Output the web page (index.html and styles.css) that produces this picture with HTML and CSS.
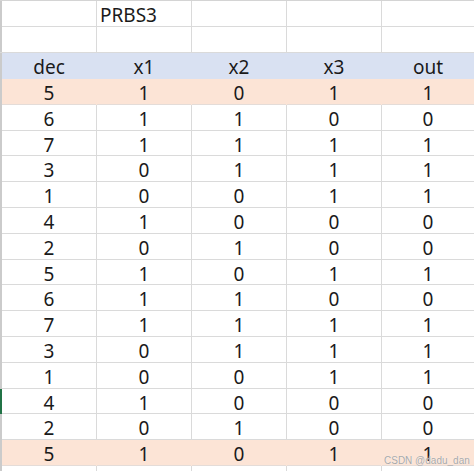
FILE: index.html
```html
<!DOCTYPE html>
<html>
<head>
<meta charset="utf-8">
<link rel="stylesheet" href="styles.css">
</head>
<body>
<div class="sheet">
  <div class="row r-top">
    <div class="c"></div><div class="c left">PRBS3</div><div class="c"></div><div class="c"></div><div class="c"></div>
  </div>
  <div class="row r-mid">
    <div class="c"></div><div class="c"></div><div class="c"></div><div class="c"></div><div class="c"></div>
  </div>
  <div class="row head">
    <div class="c">dec</div><div class="c">x1</div><div class="c">x2</div><div class="c">x3</div><div class="c">out</div>
  </div>
  <div class="row data peach"><div class="c">5</div><div class="c">1</div><div class="c">0</div><div class="c">1</div><div class="c">1</div></div>
  <div class="row data"><div class="c">6</div><div class="c">1</div><div class="c">1</div><div class="c">0</div><div class="c">0</div></div>
  <div class="row data"><div class="c">7</div><div class="c">1</div><div class="c">1</div><div class="c">1</div><div class="c">1</div></div>
  <div class="row data"><div class="c">3</div><div class="c">0</div><div class="c">1</div><div class="c">1</div><div class="c">1</div></div>
  <div class="row data"><div class="c">1</div><div class="c">0</div><div class="c">0</div><div class="c">1</div><div class="c">1</div></div>
  <div class="row data"><div class="c">4</div><div class="c">1</div><div class="c">0</div><div class="c">0</div><div class="c">0</div></div>
  <div class="row data"><div class="c">2</div><div class="c">0</div><div class="c">1</div><div class="c">0</div><div class="c">0</div></div>
  <div class="row data"><div class="c">5</div><div class="c">1</div><div class="c">0</div><div class="c">1</div><div class="c">1</div></div>
  <div class="row data"><div class="c">6</div><div class="c">1</div><div class="c">1</div><div class="c">0</div><div class="c">0</div></div>
  <div class="row data"><div class="c">7</div><div class="c">1</div><div class="c">1</div><div class="c">1</div><div class="c">1</div></div>
  <div class="row data"><div class="c">3</div><div class="c">0</div><div class="c">1</div><div class="c">1</div><div class="c">1</div></div>
  <div class="row data"><div class="c">1</div><div class="c">0</div><div class="c">0</div><div class="c">1</div><div class="c">1</div></div>
  <div class="row data sel"><div class="c">4</div><div class="c">1</div><div class="c">0</div><div class="c">0</div><div class="c">0</div></div>
  <div class="row data"><div class="c">2</div><div class="c">0</div><div class="c">1</div><div class="c">0</div><div class="c">0</div></div>
  <div class="row data peach"><div class="c">5</div><div class="c">1</div><div class="c">0</div><div class="c">1</div><div class="c">1</div></div>
  <div class="row data"><div class="c"></div><div class="c"></div><div class="c"></div><div class="c"></div><div class="c"></div></div>
  <div class="watermark">CSDN @dadu_dan</div>
</div>
</body>
</html>
```
FILE: styles.css
```css
html, body {
  margin: 0;
  padding: 0;
  background: #ffffff;
}
.sheet {
  position: relative;
  width: 474px;
  height: 471px;
  overflow: hidden;
  font-family: "Noto Sans", "Liberation Sans", sans-serif;
  font-size: 19px;
  color: #1a1a1a;
  border-top: 1px solid #d4d4d4;
  box-sizing: border-box;
}
.row {
  display: grid;
  grid-template-columns: 97px 95px 95px 95px 92px;
  box-sizing: border-box;
  border-bottom: 1px solid #dadada;
}
.c {
  box-sizing: border-box;
  border-right: 1px solid #dadada;
  text-align: center;
  padding-top: 2px;
  line-height: 24px;
  white-space: nowrap;
}
.c:first-child {
  border-left: 2px solid #cbcbcb;
}
.c:last-child {
  border-right: none;
}
.c.left {
  text-align: left;
  padding-left: 3px;
}
.r-top {
  height: 26px;
}
.r-mid {
  height: 26px;
}
.head {
  height: 26px;
  background: #d9e1f2;
  border-bottom-color: #d9e1f2;
}
.head .c {
  border-right-color: #d9e1f2;
}
.data {
  height: 25.8px;
}
.peach {
  background: #fce4d6;
  border-bottom-color: #e4dcd8;
}
.peach .c {
  border-right-color: #fce4d6;
}
.head .c:first-child,
.peach .c:first-child {
  border-left-color: #cbcbcb;
}
.sel .c:first-child {
  border-left-color: #217346;
}
.watermark {
  position: absolute;
  left: 384px;
  top: 454px;
  font-family: "Liberation Sans", sans-serif;
  font-size: 10px;
  color: #a8a8a8;
  text-shadow: 0 0 1px #ffffff;
  white-space: nowrap;
}
```
